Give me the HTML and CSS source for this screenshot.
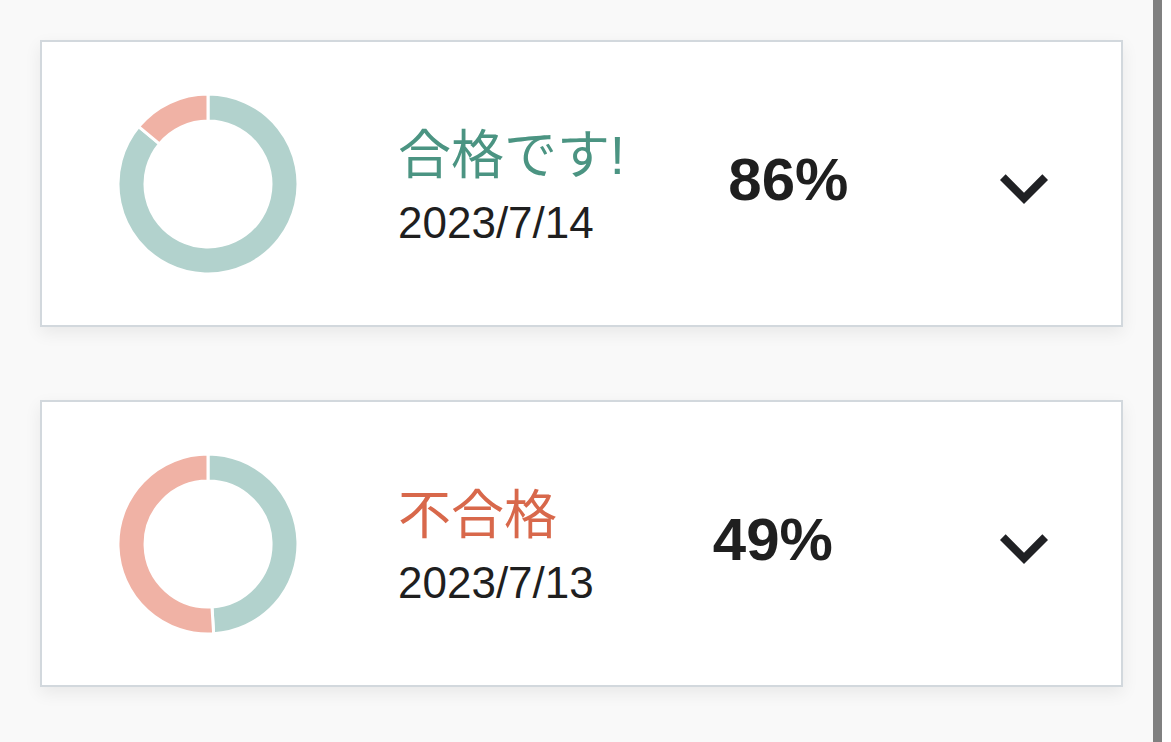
FILE: index.html
```html
<!DOCTYPE html>
<html lang="ja">
<head>
<meta charset="utf-8">
<title>結果一覧</title>
<link rel="stylesheet" href="styles.css">
</head>
<body>
<div class="page">
  <main class="list">
    <section class="card">
      <svg class="donut" width="180" height="180" viewBox="0 0 180 180">
        <path class="seg-ok" d="M90 0 A90 90 0 1 1 20.65 32.63 L41.46 49.84 A63 63 0 1 0 90 27 Z"/>
        <path class="seg-ng" d="M20.65 32.63 A90 90 0 0 1 90 0 L90 27 A63 63 0 0 0 41.46 49.84 Z"/>
      </svg>
      <div class="info">
        <div class="title pass">合格です!</div>
        <div class="date">2023/7/14</div>
      </div>
      <div class="score">86%</div>
      <button class="toggle" type="button" aria-label="詳細">
        <svg width="96" height="96" viewBox="0 0 24 24"><path d="M16.59 8.59L12 13.17 7.41 8.59 6 10l6 6 6-6z"/></svg>
      </button>
    </section>
    <section class="card">
      <svg class="donut" width="180" height="180" viewBox="0 0 180 180">
        <path class="seg-ok" d="M90 0 A90 90 0 0 1 95.65 179.82 L93.96 152.88 A63 63 0 0 0 90 27 Z"/>
        <path class="seg-ng" d="M95.65 179.82 A90 90 0 1 1 90 0 L90 27 A63 63 0 1 0 93.96 152.88 Z"/>
      </svg>
      <div class="info">
        <div class="title fail">不合格</div>
        <div class="date">2023/7/13</div>
      </div>
      <div class="score">49%</div>
      <button class="toggle" type="button" aria-label="詳細">
        <svg width="96" height="96" viewBox="0 0 24 24"><path d="M16.59 8.59L12 13.17 7.41 8.59 6 10l6 6 6-6z"/></svg>
      </button>
    </section>
  </main>
  <div class="rail"></div>
</div>
</body>
</html>
```
FILE: styles.css
```css
html, body {
  margin: 0;
  padding: 0;
  height: 100%;
}
body {
  background: #f9f9f9;
  font-family: "Liberation Sans", "Noto Sans CJK JP", sans-serif;
  color: #1f1f1f;
  overflow: hidden;
}
.page {
  display: flex;
  height: 100%;
  background: #f9f9f9;
  box-sizing: border-box;
  border-right: 9px solid #ffffff;
}
.list {
  flex: 1 1 auto;
  min-width: 0;
  display: flex;
  flex-direction: column;
  gap: 73px;
  padding: 40px 0 0 40px;
}
.rail {
  flex: none;
  width: 9px;
  background: #808080;
}
.card {
  box-sizing: border-box;
  width: 1083px;
  height: 287px;
  background: #ffffff;
  border: 2px solid #d2d8dd;
  box-shadow: 0 6px 16px rgba(0, 0, 0, 0.07);
  display: flex;
  align-items: center;
  padding: 0 49px 0 76px;
}
.donut {
  flex: none;
  display: block;
}
.seg-ok {
  fill: #b2d2cd;
  stroke: #ffffff;
  stroke-width: 3;
}
.seg-ng {
  fill: #f0b2a5;
  stroke: #ffffff;
  stroke-width: 3;
}
.info {
  margin-left: 100px;
  display: flex;
  flex-direction: column;
  margin-top: 7px;
}
.title {
  font-size: 53px;
  line-height: 60px;
  white-space: nowrap;
}
.title.pass { color: #4b9482; }
.title.fail { color: #d8684b; }
.date {
  font-size: 44px;
  line-height: 50px;
  margin-top: 12px;
  white-space: nowrap;
}
.score {
  flex: 1;
  text-align: center;
  font-weight: bold;
  font-size: 60px;
  line-height: 66px;
  margin-right: 24px;
  margin-bottom: 8px;
}
.toggle {
  flex: none;
  border: 0;
  padding: 0;
  background: transparent;
  width: 96px;
  height: 96px;
  display: block;
  margin-top: 8px;
}
.toggle svg {
  display: block;
  fill: #202124;
}
```
